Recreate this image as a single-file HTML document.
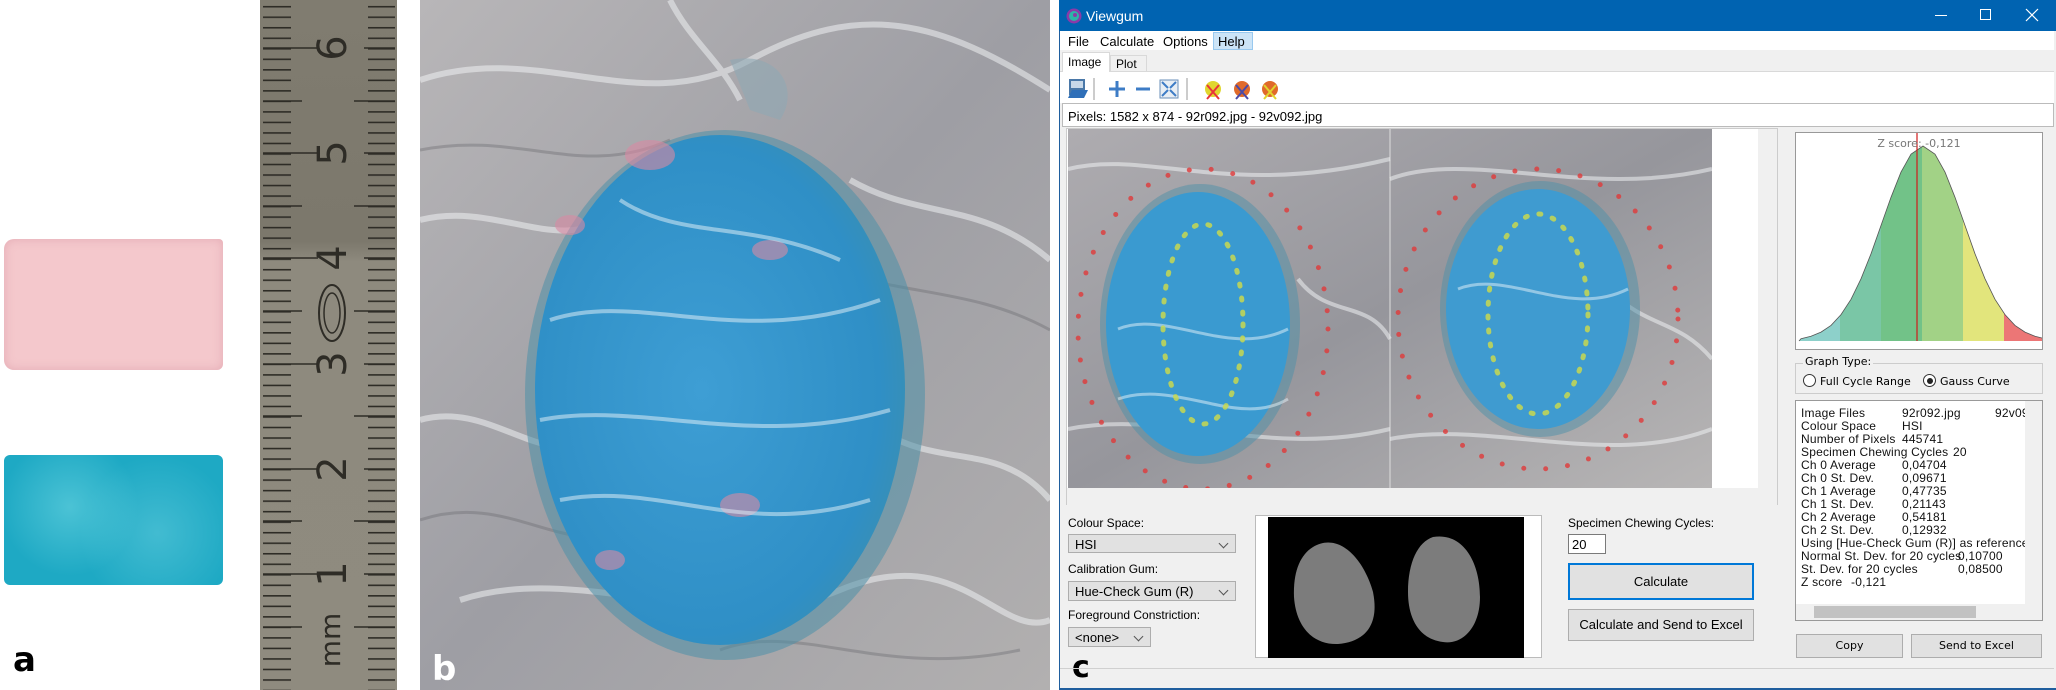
<!DOCTYPE html>
<html><head><meta charset="utf-8"><style>
*{margin:0;padding:0;box-sizing:border-box}
body{width:2056px;height:690px;overflow:hidden;background:#fff;position:relative;font-family:"Liberation Sans",sans-serif}
.abs{position:absolute}
.lab{position:absolute;font:bold 34px "DejaVu Sans",sans-serif}
.ui{font:13px "Liberation Sans",sans-serif;color:#000}
.combo{position:absolute;background:#e1e1e1;border:1px solid #adadad;font:13px "Liberation Sans",sans-serif;padding:2px 6px;line-height:15px}
.combo:after{content:"";position:absolute;right:8px;top:5px;width:6px;height:6px;border-right:1px solid #555;border-bottom:1px solid #555;transform:rotate(45deg)}
.btn{position:absolute;background:#e1e1e1;border:1px solid #adadad;font:13px "Liberation Sans",sans-serif;text-align:center}
.tb{font:11px "DejaVu Sans",sans-serif;line-height:13px;white-space:pre;color:#000}
.tl{position:absolute;font:12px "Liberation Sans",sans-serif;white-space:pre;color:#111;letter-spacing:.2px}
</style></head><body>

<!-- panel a -->
<div class="abs" style="left:4px;top:239px;width:219px;height:131px;background:#f4c8cc;border-radius:10px 4px 6px 10px;box-shadow:inset 0 0 10px rgba(200,120,140,.35)"></div>
<div class="abs" style="left:4px;top:455px;width:219px;height:130px;background:#1ea9c4;border-radius:6px;background-image:radial-gradient(circle at 30% 40%,rgba(120,220,230,.5),transparent 40%),radial-gradient(circle at 70% 60%,rgba(110,210,225,.45),transparent 45%)"></div>
<div class="lab" style="left:13px;top:640px;color:#000">a</div>

<!-- ruler -->
<div class="abs" style="left:260px;top:0;width:137px;height:690px;background:linear-gradient(180deg,#807c70 0,#7c786c 35%,#8e8a7e 38%,#8f8b7f 100%)"></div>
<svg class="abs" style="left:260px;top:0" width="137" height="690">
<defs><pattern id="tk" x="0" y="5.92" width="137" height="10.52" patternUnits="userSpaceOnUse"><rect x="3" y="0" width="28" height="1.6" fill="#2e2c26"/><rect x="108" y="0" width="27" height="1.6" fill="#2e2c26"/></pattern></defs>
<rect width="137" height="690" fill="url(#tk)"/>
<g stroke="#2e2c26" stroke-width="1.6">
<path d="M3 48H58M104 48H135M3 153H58M104 153H135M3 258H58M104 258H135M3 364H58M104 364H135M3 469H58M104 469H135M3 574H58M104 574H135"/>
<path d="M3 101H42M3 206H42M3 311H42M3 416H42M3 521H42M3 627H42M94 101H135M94 206H135M94 311H135M94 416H135M94 521H135M94 627H135"/>
</g>
<g font-family="DejaVu Sans" font-size="40" fill="#2e2c26" text-anchor="middle">
<text transform="translate(86,48) rotate(-90)">6</text>
<text transform="translate(86,153) rotate(-90)">5</text>
<text transform="translate(86,258) rotate(-90)">4</text>
<text transform="translate(86,364) rotate(-90)">3</text>
<text transform="translate(86,469) rotate(-90)">2</text>
<text transform="translate(86,574) rotate(-90)">1</text>
<text transform="translate(80,640) rotate(-90)" font-size="28">mm</text>
</g>
<ellipse cx="72" cy="313" rx="13" ry="28" fill="none" stroke="#2e2c26" stroke-width="2"/>
<ellipse cx="72" cy="313" rx="8" ry="20" fill="none" stroke="#2e2c26" stroke-width="1.5"/>
</svg>

<!-- panel b -->
<svg class="abs" style="left:420px;top:0" width="630" height="690">
<defs>
<linearGradient id="sil" x1="0" y1="0" x2="1" y2="1"><stop offset="0" stop-color="#b8b6b8"/><stop offset=".5" stop-color="#9e9ea4"/><stop offset="1" stop-color="#b2b0b0"/></linearGradient>
<radialGradient id="blu" cx=".45" cy=".5" r=".6"><stop offset="0" stop-color="#3e9ed4"/><stop offset=".8" stop-color="#2f8fc6"/><stop offset="1" stop-color="#3b8fb0"/></radialGradient>
</defs>
<rect width="630" height="690" fill="url(#sil)"/>
<g fill="none" stroke="#eef0f2" stroke-width="6" opacity=".55">
<path d="M0 80C120 40 220 120 330 60S520 20 630 90"/>
<path d="M0 220C80 200 140 260 200 210"/>
<path d="M430 180C500 220 560 200 630 260"/>
<path d="M0 420C70 400 120 470 180 440"/>
<path d="M460 430C520 470 580 440 630 500"/>
<path d="M40 600C160 560 300 640 420 590S580 640 630 620"/>
<path d="M250 0C270 40 300 60 320 100"/>
</g>
<g fill="none" stroke="#6c6c70" stroke-width="3" opacity=".4">
<path d="M0 150C100 130 160 180 250 140"/>
<path d="M380 250C450 300 540 280 630 330"/>
<path d="M0 520C90 490 140 560 220 530"/>
<path d="M300 650C380 620 460 680 600 650"/>
</g>
<path d="M310 60C360 50 380 90 360 120 L330 110Z" fill="#8fa8b4" opacity=".6"/>
<ellipse cx="305" cy="395" rx="200" ry="265" fill="#4d8fa8" opacity=".55"/>
<ellipse cx="300" cy="390" rx="185" ry="255" fill="url(#blu)"/>
<g fill="#d98aa4" opacity=".6"><ellipse cx="230" cy="155" rx="25" ry="15"/><ellipse cx="150" cy="225" rx="15" ry="10"/><ellipse cx="350" cy="250" rx="18" ry="10"/><ellipse cx="320" cy="505" rx="20" ry="12"/><ellipse cx="190" cy="560" rx="15" ry="10"/></g>
<g fill="none" stroke="#e8f4fa" stroke-width="4" opacity=".5">
<path d="M130 320C220 290 320 350 460 300"/><path d="M120 420C220 400 330 450 470 410"/><path d="M140 500C240 480 320 540 450 500"/><path d="M200 200C260 240 330 220 420 260"/>
</g>
<text x="12" y="680" font-family="DejaVu Sans" font-weight="bold" font-size="34" fill="#fff">b</text>
</svg>

<!-- panel c window -->
<div class="abs" style="left:1059px;top:0;width:997px;height:690px;background:#f0f0f0;border-left:1px solid #1f5e9e"></div>
<div class="abs" style="left:1059px;top:0;width:997px;height:31px;background:#0063b1"></div>
<svg class="abs" style="left:1066px;top:8px" width="16" height="16"><circle cx="8" cy="8" r="7.5" fill="#8a3aa8"/><circle cx="8" cy="8" r="5" fill="#2cb5a8"/><circle cx="9" cy="7" r="2" fill="#8a3aa8"/></svg>
<div class="abs ui" style="left:1086px;top:8px;color:#fff;font-size:14px">Viewgum</div>
<div class="abs" style="left:1935px;top:15px;width:12px;height:1px;background:#fff"></div>
<div class="abs" style="left:1980px;top:9px;width:11px;height:11px;border:1px solid #fff"></div>
<svg class="abs" style="left:2025px;top:8px" width="14" height="14"><path d="M1 1L13 13M13 1L1 13" stroke="#fff" stroke-width="1.2"/></svg>
<div class="abs" style="left:1060px;top:31px;width:994px;height:19px;background:#fff"></div>
<div class="abs" style="left:1213px;top:32px;width:40px;height:18px;background:#cce4f7;border:1px solid #99c9ef"></div>
<div class="abs ui" style="left:1068px;top:34px">File</div>
<div class="abs ui" style="left:1100px;top:34px">Calculate</div>
<div class="abs ui" style="left:1163px;top:34px">Options</div>
<div class="abs ui" style="left:1218px;top:34px">Help</div>
<div class="abs" style="left:1060px;top:71px;width:994px;height:1px;background:#d9d9d9"></div>
<div class="abs" style="left:1062px;top:52px;width:48px;height:21px;background:#fff;border:1px solid #d9d9d9;border-bottom:none"></div>
<div class="abs ui" style="left:1068px;top:55px;font-size:12px">Image</div>
<div class="abs" style="left:1110px;top:55px;width:37px;height:17px;background:#f0f0f0;border:1px solid #d9d9d9"></div>
<div class="abs ui" style="left:1116px;top:57px;font-size:12px">Plot</div>
<div class="abs" style="left:1060px;top:72px;width:994px;height:31px;background:#fff"></div>
<svg class="abs" style="left:1066px;top:76px" width="230" height="26">
<rect x="3" y="3" width="16" height="16" fill="#4a78a8"/><rect x="5" y="5" width="12" height="7" fill="#c8d8e8"/><path d="M2 22L6 14H22L18 22Z" fill="#2f6fb8"/>
<line x1="28" y1="2" x2="28" y2="24" stroke="#999"/>
<path d="M51 5V21M43 13H59" stroke="#3d7cc6" stroke-width="3"/>
<path d="M70 13H84" stroke="#3d7cc6" stroke-width="3"/>
<rect x="94" y="4" width="18" height="18" fill="#e8eef4" stroke="#6a8fb8"/><path d="M96 6L102 12M110 6L104 12M96 20L102 14M110 20L104 14" stroke="#3d7cc6" stroke-width="2"/>
<line x1="121" y1="2" x2="121" y2="24" stroke="#999"/>
<circle cx="147" cy="13" r="8" fill="#e0d62e"/><path d="M141 9L153 23M153 9L141 23" stroke="#e8343a" stroke-width="2"/>
<circle cx="176" cy="13" r="8" fill="#e06a2a"/><path d="M170 9L182 23M182 9L170 23" stroke="#4a4aa8" stroke-width="2"/>
<circle cx="204" cy="13" r="8" fill="#e06a2a"/><path d="M198 9L210 23M210 9L198 23" stroke="#e0d62e" stroke-width="2"/>
</svg>
<div class="abs" style="left:1062px;top:103px;width:992px;height:24px;background:#fff;border:1px solid #bbb"></div>
<div class="abs ui" style="left:1068px;top:109px">Pixels: 1582 x 874 - 92r092.jpg - 92v092.jpg</div>

<!-- image area -->
<div class="abs" style="left:1066px;top:128px;width:712px;height:377px;background:#fff;border:1px solid #ccc"></div>
<svg class="abs" style="left:1068px;top:129px" width="644" height="359">
<defs><linearGradient id="s2" x1="0" y1="0" x2="1" y2="1"><stop offset="0" stop-color="#aeacb0"/><stop offset=".5" stop-color="#96969c"/><stop offset="1" stop-color="#b8b6b6"/></linearGradient></defs>
<rect width="644" height="359" fill="url(#s2)"/>
<line x1="322" y1="0" x2="322" y2="359" stroke="#ddd"/>
<g fill="none" stroke="#eef0f2" stroke-width="4" opacity=".55"><path d="M0 40C80 20 160 70 322 30"/><path d="M322 50C400 20 520 70 644 40"/><path d="M0 300C100 280 200 330 322 300"/><path d="M322 310C420 290 540 340 644 300"/><path d="M230 150C260 190 300 170 322 210"/><path d="M540 160C580 200 610 190 644 230"/></g>
<ellipse cx="132" cy="195" rx="100" ry="140" fill="#4d8fa8" opacity=".5"/>
<ellipse cx="130" cy="195" rx="92" ry="132" fill="#3a9ad0"/>
<ellipse cx="472" cy="180" rx="100" ry="128" fill="#4d8fa8" opacity=".5"/>
<ellipse cx="470" cy="180" rx="92" ry="120" fill="#3f9bd0"/>
<g fill="none" stroke="#e8f4fa" stroke-width="3" opacity=".5"><path d="M50 200C100 180 160 230 220 200"/><path d="M50 270C110 250 170 300 220 270"/><path d="M390 160C440 140 500 190 560 160"/></g>
<g fill="none" stroke-linecap="round" stroke-width="5">
<ellipse cx="135" cy="195" rx="40" ry="100" stroke="#c8d850" stroke-dasharray="2 12" opacity=".85"/>
<ellipse cx="470" cy="185" rx="50" ry="100" stroke="#c8d850" stroke-dasharray="2 12" opacity=".85"/>
<ellipse cx="135" cy="200" rx="125" ry="160" stroke="#e03a3a" stroke-dasharray="0 22" opacity=".8"/>
<ellipse cx="470" cy="190" rx="140" ry="150" stroke="#e03a3a" stroke-dasharray="0 22" opacity=".8"/>
</g>
</svg>
<div class="abs" style="left:1758px;top:129px;width:19px;height:359px;background:#f0f0f0"></div>
<div class="abs" style="left:1067px;top:488px;width:710px;height:17px;background:#f0f0f0"></div>

<!-- controls -->
<div class="abs ui" style="left:1068px;top:516px;font-size:12px">Colour Space:</div>
<div class="combo" style="left:1068px;top:534px;width:168px;height:19px">HSI</div>
<div class="abs ui" style="left:1068px;top:562px;font-size:12px">Calibration Gum:</div>
<div class="combo" style="left:1068px;top:581px;width:168px;height:20px">Hue-Check Gum (R)</div>
<div class="abs ui" style="left:1068px;top:608px;font-size:12px">Foreground Constriction:</div>
<div class="combo" style="left:1068px;top:627px;width:83px;height:20px">&lt;none&gt;</div>
<div class="abs" style="left:1255px;top:515px;width:287px;height:143px;background:#fff;border:1px solid #bbb"></div>
<svg class="abs" style="left:1268px;top:517px" width="256" height="141"><rect width="256" height="141" fill="#000"/><path d="M45 30C70 15 95 40 105 75C112 110 95 125 70 127C45 128 28 110 26 80C25 55 32 38 45 30Z" fill="#7c7c7c"/><path d="M165 20C195 15 212 45 212 80C212 110 195 128 175 125C150 122 140 100 140 75C140 45 150 25 165 20Z" fill="#7c7c7c"/></svg>
<div class="abs ui" style="left:1568px;top:516px;font-size:12px">Specimen Chewing Cycles:</div>
<div class="abs ui" style="left:1568px;top:534px;width:38px;height:20px;background:#fff;border:1px solid #7a7a7a;padding:2px 3px">20</div>
<div class="btn" style="left:1568px;top:563px;width:186px;height:37px;border:2px solid #0078d7;line-height:33px">Calculate</div>
<div class="btn" style="left:1568px;top:609px;width:186px;height:32px;line-height:30px">Calculate and Send to Excel</div>
<div class="abs" style="left:1072px;top:650px;font:bold 30px 'DejaVu Sans',sans-serif">c</div>
<div class="abs" style="left:1060px;top:668px;width:994px;height:1px;background:#d0d0d0"></div>
<div class="abs" style="left:1060px;top:688px;width:996px;height:2px;background:#1f5e9e"></div>

<!-- graph -->
<div class="abs" style="left:1795px;top:132px;width:248px;height:218px;background:#fff;border:1px solid #999"></div>
<svg class="abs" style="left:1796px;top:133px" width="246" height="216">
<defs><clipPath id="g"><path d="M3 208L5 205.7L15 203.3L25 199.1L35 192.4L45 181.6L55 166.3L65 145.8L75 120.8L85 92.5L95 64.3L105 39.1L115 21.2L127 13L139 21.2L149 39.1L159 64.3L169 92.5L179 120.8L189 145.8L199 166.3L209 181.6L219 192.4L229 199.1L239 203.3L246 205L246 208Z"/></clipPath></defs>
<g clip-path="url(#g)"><rect x="0" y="0" width="44" height="210" fill="#8dd0ca"/><rect x="44" y="0" width="41" height="210" fill="#7ac6a6"/><rect x="85" y="0" width="41" height="210" fill="#72c288"/><rect x="126" y="0" width="41" height="210" fill="#a2d286"/><rect x="167" y="0" width="41" height="210" fill="#e2e57c"/><rect x="208" y="0" width="40" height="210" fill="#ec7676"/></g>
<path d="M3 208L5 205.7L15 203.3L25 199.1L35 192.4L45 181.6L55 166.3L65 145.8L75 120.8L85 92.5L95 64.3L105 39.1L115 21.2L127 13L139 21.2L149 39.1L159 64.3L169 92.5L179 120.8L189 145.8L199 166.3L209 181.6L219 192.4L229 199.1L239 203.3L246 205" fill="none" stroke="#555" stroke-width=".8"/>
<line x1="121" y1="0" x2="121" y2="208" stroke="#d01c1c" stroke-width="1.2"/>
<text x="123" y="14" text-anchor="middle" font-family="DejaVu Sans" font-size="11" fill="#777">Z score: -0,121</text>
</svg>
<div class="abs" style="left:1795px;top:363px;width:248px;height:31px;border:1px solid #ccc"></div>
<div class="abs tb" style="left:1803px;top:355px;background:#f0f0f0;padding:0 2px">Graph Type:</div>
<div class="abs" style="left:1803px;top:374px;width:13px;height:13px;border:1px solid #333;border-radius:50%;background:#fff"></div>
<div class="abs tb" style="left:1820px;top:375px">Full Cycle Range</div>
<div class="abs" style="left:1923px;top:374px;width:13px;height:13px;border:1px solid #333;border-radius:50%;background:#fff"><div style="margin:2.5px;width:6px;height:6px;border-radius:50%;background:#222"></div></div>
<div class="abs tb" style="left:1940px;top:375px">Gauss Curve</div>
<div class="abs" style="left:1795px;top:400px;width:248px;height:221px;background:#fff;border:1px solid #999;overflow:hidden">
<div class="tl" style="left:5px;top:5px">Image Files</div><div class="tl" style="left:106px;top:5px">92r092.jpg</div><div class="tl" style="left:199px;top:5px">92v09</div>
<div class="tl" style="left:5px;top:18px">Colour Space</div><div class="tl" style="left:106px;top:18px">HSI</div>
<div class="tl" style="left:5px;top:31px">Number of Pixels</div><div class="tl" style="left:106px;top:31px">445741</div>
<div class="tl" style="left:5px;top:44px">Specimen Chewing Cycles</div><div class="tl" style="left:157px;top:44px">20</div>
<div class="tl" style="left:5px;top:57px">Ch 0 Average</div><div class="tl" style="left:106px;top:57px">0,04704</div>
<div class="tl" style="left:5px;top:70px">Ch 0 St. Dev.</div><div class="tl" style="left:106px;top:70px">0,09671</div>
<div class="tl" style="left:5px;top:83px">Ch 1 Average</div><div class="tl" style="left:106px;top:83px">0,47735</div>
<div class="tl" style="left:5px;top:96px">Ch 1 St. Dev.</div><div class="tl" style="left:106px;top:96px">0,21143</div>
<div class="tl" style="left:5px;top:109px">Ch 2 Average</div><div class="tl" style="left:106px;top:109px">0,54181</div>
<div class="tl" style="left:5px;top:122px">Ch 2 St. Dev.</div><div class="tl" style="left:106px;top:122px">0,12932</div>
<div class="tl" style="left:5px;top:135px">Using [Hue-Check Gum (R)] as reference (ch</div>
<div class="tl" style="left:5px;top:148px">Normal St. Dev. for 20 cycles</div><div class="tl" style="left:162px;top:148px">0,10700</div>
<div class="tl" style="left:5px;top:161px">St. Dev. for 20 cycles</div><div class="tl" style="left:162px;top:161px">0,08500</div>
<div class="tl" style="left:5px;top:174px">Z score</div><div class="tl" style="left:55px;top:174px">-0,121</div>
<div style="position:absolute;right:0;top:0;width:17px;height:205px;background:#f0f0f0"></div>
<div style="position:absolute;left:0;bottom:0;width:246px;height:16px;background:#f0f0f0"></div>
<div style="position:absolute;left:18px;bottom:2px;width:162px;height:12px;background:#c2c2c2"></div>
</div>
<div class="btn" style="left:1796px;top:634px;width:107px;height:24px;line-height:22px;font-family:'DejaVu Sans';font-size:11px">Copy</div>
<div class="btn" style="left:1911px;top:634px;width:131px;height:24px;line-height:22px;font-family:'DejaVu Sans';font-size:11px">Send to Excel</div>
</body></html>
